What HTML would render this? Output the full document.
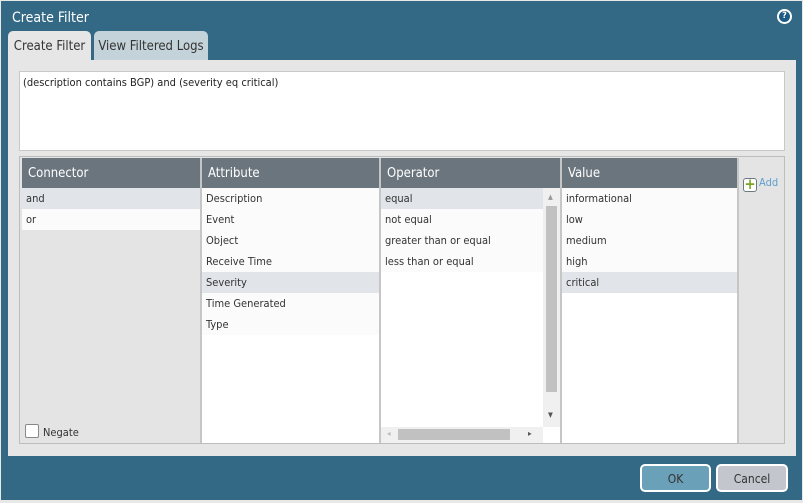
<!DOCTYPE html>
<html><head><style>
*{margin:0;padding:0;box-sizing:border-box}
body{width:803px;height:503px;background:#e8e8e8;font-family:"DejaVu Sans Condensed","Liberation Sans",sans-serif;font-size:11px;color:#333;position:relative;overflow:hidden}
.dlg{position:absolute;left:1px;top:1px;width:801px;height:499px;background:#336985}
.ttl{position:absolute;left:12px;top:10px;color:#fff;font-size:14px}
.help{position:absolute;left:777px;top:9px;width:15px;height:15px;border-radius:50%;background:#1d5a85;border:2px solid #fff;color:#fff;font-size:9px;font-weight:bold;text-align:center;line-height:11px}
.tab{position:absolute;top:31px;height:30px;border-radius:5px 5px 0 0;font-size:13px;padding:8px 0 0;text-align:center;color:#333}
.t1{left:8px;width:83px;background:#e6e6e6}
.t2{left:94px;width:114px;background:#c4d3da}
.panel{position:absolute;left:8px;top:60px;width:788px;height:396px;background:#e6e6e6}
.ta{position:absolute;left:19px;top:71px;width:766px;height:80px;background:#fff;border:1px solid #c9c9c9;padding:4px 3px;font-size:11px;color:#222}
.grid{position:absolute;left:19px;top:156px;width:766px;height:288px;border:1px solid #bdbdbd;background:#e4e4e4}
.col{position:absolute;top:1px;height:285px;border-right:2px solid #c6c6c6}
.hd{height:30px;background:#6b757e;color:#fff;font-size:13px;padding:8px 0 0 6px}
.r{height:21px;padding:4px 0 0 4px;background:#fbfbfb;font-size:11px;color:#333}
.sel{background:#e1e4e9}
.add{position:absolute;left:743px;top:176px;color:#5da0cc;font-size:11px}
.add b{display:inline-block;width:14px;height:14px;border:1.5px solid #6a7a80;border-radius:3px;background:#fff;color:#7aa520;font-size:15px;line-height:11px;text-align:center;vertical-align:-3px;margin-right:2px}
.btn{position:absolute;top:464px;height:28px;border:2px solid #fff;border-radius:5px;text-align:center;padding-top:6px;font-size:12px;color:#333}
</style></head><body>
<div class="dlg"></div>
<div class="ttl">Create Filter</div>
<div class="help">?</div>
<div class="tab t1">Create Filter</div>
<div class="tab t2">View Filtered Logs</div>
<div class="panel"></div>
<div class="ta">(description contains BGP) and (severity eq critical)</div>
<div class="grid">
 <div class="col" style="left:2px;width:180px;background:#e4e4e4">
  <div class="hd">Connector</div>
  <div class="r sel">and</div><div class="r">or</div>
  <div style="position:absolute;left:3px;top:266px;width:14px;height:14px;border:1px solid #888;background:#fff;border-radius:2px"></div>
  <div style="position:absolute;left:21px;top:268px;font-size:11px">Negate</div>
 </div>
 <div class="col" style="left:182px;width:179px;background:#fff">
  <div class="hd">Attribute</div>
  <div class="r">Description</div><div class="r">Event</div><div class="r">Object</div><div class="r">Receive Time</div><div class="r sel">Severity</div><div class="r">Time Generated</div><div class="r">Type</div>
 </div>
 <div class="col" style="left:361px;width:181px;background:#fff">
  <div class="hd">Operator</div>
  <div style="margin-right:17px"><div class="r sel">equal</div><div class="r">not equal</div><div class="r">greater than or equal</div><div class="r">less than or equal</div></div>
  <div style="position:absolute;right:0;top:30px;width:17px;height:239px;background:#f0f0f0">
   <div style="position:absolute;left:3px;top:18px;width:11px;height:186px;background:#c1c1c1"></div>
   <div style="position:absolute;left:5px;top:5px;font-size:7px;color:#999">▲</div>
   <div style="position:absolute;left:5px;top:223px;font-size:7px;color:#555">▼</div>
  </div>
  <div style="position:absolute;left:0;top:269px;width:162px;height:16px;background:#f0f0f0">
   <div style="position:absolute;left:17px;top:2px;width:112px;height:11px;background:#c1c1c1"></div>
   <div style="position:absolute;left:6px;top:2px;font-size:8px;color:#bbb">◂</div>
   <div style="position:absolute;left:147px;top:2px;font-size:8px;color:#555">▸</div>
  </div>
 </div>
 <div class="col" style="left:542px;width:177px;background:#fff">
  <div class="hd">Value</div>
  <div class="r">informational</div><div class="r">low</div><div class="r">medium</div><div class="r">high</div><div class="r sel">critical</div>
 </div>
</div>
<div class="add"><b>+</b>Add</div>
<div class="btn" style="left:640px;width:71px;background:#6aa0b8">OK</div>
<div class="btn" style="left:716px;width:72px;background:#c3c7cd">Cancel</div>
</body></html>
